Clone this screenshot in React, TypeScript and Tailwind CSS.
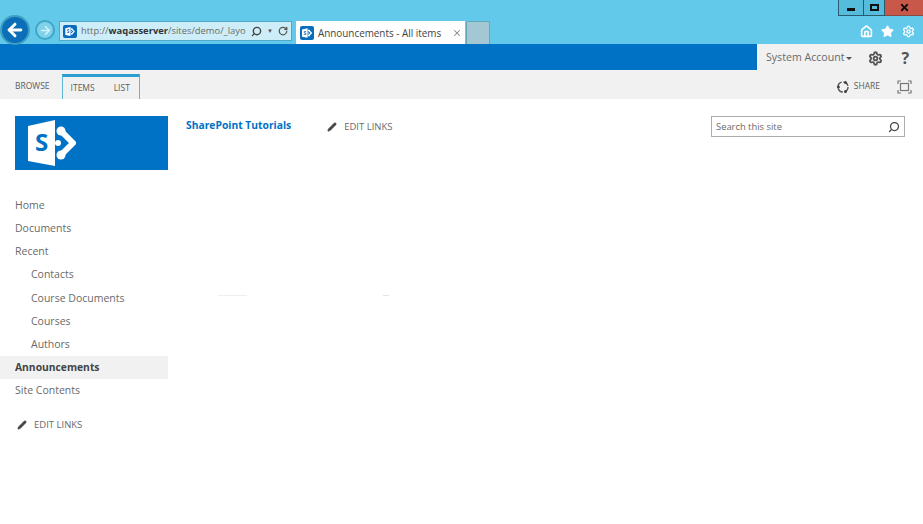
import { ArrowLeft, ArrowRight, Home, Pencil, RotateCw, Search, Settings, Star, X } from "lucide-react";

const font = { fontFamily: '"Open Sans", "Noto Sans", sans-serif' };

// SharePoint mark: folded page with the S and the three-lobed arrow next to it
function SpLogo({ className, page, ink }: { className?: string; page: string; ink: string }) {
  return (
    <svg viewBox="0 0 48 46" className={className}>
      <path d="M0 6 L27 0 V46 L0 41 Z" fill={page} />
      <text x="7" y="31" fontSize="24" fontWeight="700" fill={ink} fontFamily="Open Sans, sans-serif">S</text>
      <path d="M33 11 L45 23 L33 35" fill="none" stroke={page} strokeWidth="6" strokeLinejoin="round" />
      <circle cx="33" cy="11" r="4.5" fill={page} />
      <circle cx="33" cy="35" r="4.5" fill={page} />
      <circle cx="30" cy="23" r="3" fill={page} />
    </svg>
  );
}

function ShareIcon() {
  return (
    <svg viewBox="0 0 14 14" className="mr-[4px] h-[14px] w-[14px]">
      <circle cx="7" cy="7" r="5" fill="none" stroke="#555555" strokeWidth="1.4" strokeDasharray="6 1.8" />
      <circle cx="2.4" cy="7" r="1.5" fill="#444444" />
      <circle cx="9.5" cy="2.6" r="1.5" fill="#444444" />
      <circle cx="9.5" cy="11.4" r="1.5" fill="#444444" />
    </svg>
  );
}

function FocusIcon() {
  return (
    <svg viewBox="0 0 15 14" className="ml-[17px] h-[14px] w-[15px]" fill="none" stroke="#777777" strokeWidth="1.2">
      <path d="M1 4 V1 H4 M11 1 H14 V4 M14 10 V13 H11 M4 13 H1 V10" />
      <rect x="3.5" y="3.5" width="8" height="7" />
    </svg>
  );
}

function NavLink({ label, sub, active }: { label: string; sub?: boolean; active?: boolean }) {
  return (
    <div
      className={`flex h-[23.1px] items-center ${sub ? "pl-[31px]" : "pl-[15px]"} ${
        active ? "bg-[#f1f1f1] text-[10.3px] font-bold text-[#444444]" : "text-[10.5px] text-[#6a6a6a]"
      }`}
    >
      {label}
    </div>
  );
}

function EditLinks() {
  return (
    <div className="flex items-center gap-[7px] text-[9.5px] text-[#6a6a6a]">
      <Pencil className="h-[10px] w-[10px] fill-[#444444] text-[#444444]" strokeWidth={1.5} />
      <span>EDIT LINKS</span>
    </div>
  );
}

function BrowserChrome() {
  return (
    <div className="relative flex h-[44px] flex-col bg-[#62c9ea]">
      <div className="flex h-[16px] justify-end">
        <div className="flex w-[25px] items-end justify-center border-b border-l border-[#2b5b6e] bg-[#55bcdc] pb-[4px]">
          <div className="h-[3px] w-[8px] bg-[#111111]" />
        </div>
        <div className="flex w-[22px] items-center justify-center border-x border-b border-[#2b5b6e] bg-[#55bcdc]">
          <div className="h-[7px] w-[9px] border-2 border-[#111111]" />
        </div>
        <div className="flex w-[38px] items-center justify-center border-b border-[#8a4a40] bg-[#c7584a]">
          <X className="h-[11px] w-[11px] text-[#111111]" strokeWidth={4} />
        </div>
      </div>

      <div className="flex flex-1 items-end pl-[59px] pr-[8px]">
        <div className="mb-[3px] flex h-[20px] w-[233px] items-center border border-[#4fa9c8] bg-[#cdeef8] pl-[3px] text-[9.4px] text-[#6a6a6a]">
          <div className="mr-[4px] h-[13px] w-[14px] rounded-[2px] bg-[#0a6cbf] p-[2px]">
            <SpLogo className="h-[9px] w-[10px]" page="#ffffff" ink="#0a6cbf" />
          </div>
          <span className="w-[170px] overflow-hidden whitespace-nowrap">
            http://<b className="text-[#333333]">waqasserver</b>/sites/demo/_layo
          </span>
          <Search className="h-[11px] w-[11px] -scale-x-100 text-[#444444]" strokeWidth={3} />
          <span className="ml-[5px] text-[6px] text-[#555555]">▼</span>
          <RotateCw className="ml-[5px] h-[10px] w-[10px] text-[#555555]" strokeWidth={3} />
        </div>
        <div className="ml-[4px] flex h-[23px] w-[169px] items-center bg-white pl-[4px] pt-[1px] text-[9.9px] text-[#444444]">
          <div className="mr-[4px] h-[14px] w-[14px] rounded-[2px] bg-[#0a6cbf] p-[2px]">
            <SpLogo className="h-[10px] w-[10px]" page="#ffffff" ink="#0a6cbf" />
          </div>
          <span className="flex-1 whitespace-nowrap">Announcements - All items</span>
          <X className="mr-[3px] h-[10px] w-[10px] text-[#888888]" strokeWidth={2.5} />
        </div>
        <div className="ml-[1px] h-[23px] w-[24px] rounded-t-[2px] border-x border-t border-[#62a9bd] bg-[#a3c7d3]" />
        <div className="mb-[6px] ml-auto flex items-center gap-[8px] text-white">
          <Home className="h-[13px] w-[13px]" strokeWidth={3} />
          <Star className="h-[13px] w-[13px] fill-white" />
          <Settings className="h-[13px] w-[13px]" strokeWidth={2.5} />
        </div>
      </div>

      {/* back and forward buttons hang over the address row */}
      <div className="absolute left-0 top-[15px] flex h-[30px] w-[30px] items-center justify-center rounded-full border-2 border-[#3f9fc2] bg-[#0a6fb8]">
        <ArrowLeft className="h-[20px] w-[20px] text-white" strokeWidth={3.5} />
      </div>
      <div className="absolute left-[35px] top-[20px] flex h-[20px] w-[20px] items-center justify-center rounded-full border-2 border-[#3fa6c8] bg-[#7fd2ea]">
        <ArrowRight className="h-[13px] w-[13px] text-[#d5f1f9]" strokeWidth={3} />
      </div>
    </div>
  );
}

export default function App() {
  const links = [
    { label: "Home" },
    { label: "Documents" },
    { label: "Recent" },
    { label: "Contacts", sub: true },
    { label: "Course Documents", sub: true },
    { label: "Courses", sub: true },
    { label: "Authors", sub: true },
    { label: "Announcements", active: true },
    { label: "Site Contents" },
  ];

  return (
    <div className="flex h-[524px] w-[923px] flex-col overflow-hidden bg-white" style={font}>
      <BrowserChrome />

      <div className="flex h-[26px] bg-[#0072c6]">
        <div className="flex-1" />
        <div className="flex w-[166px] items-center bg-[#f1f1f1] pl-[9px] pt-[2px] text-[10.6px] text-[#6a6a6a]">
          <span className="whitespace-nowrap">System Account</span>
          <span className="ml-[2px] h-0 w-0 border-x-[3px] border-t-[3px] border-x-transparent border-t-[#555555]" />
          <Settings className="ml-[16px] h-[15px] w-[15px] text-[#555555]" strokeWidth={3} />
          <span className="ml-[18px] text-[16px] font-bold leading-none text-[#555555]">?</span>
        </div>
      </div>

      <div className="flex h-[29px] items-end bg-[#f1f1f1] text-[8.5px] text-[#5c5c5c]">
        <div className="flex h-[25px] items-center pl-[15px] pr-[12px]">BROWSE</div>
        <div className="flex h-[25px] items-center gap-[19px] border-x border-t-[3px] border-[#60b6d6] border-t-[#2a9fd0] pl-[8px] pr-[9px]">
          <span>ITEMS</span>
          <span>LIST</span>
        </div>
        <div className="ml-auto flex h-[25px] items-center pr-[11px]">
          <ShareIcon />
          <span>SHARE</span>
          <FocusIcon />
        </div>
      </div>

      <div className="flex flex-1">
        <div className="w-[168px]">
          <div className="ml-[15px] mt-[17px] flex h-[54px] w-[153px] items-center bg-[#0072c6] pl-[13px]">
            <SpLogo className="h-[46px] w-[48px]" page="#ffffff" ink="#0072c6" />
          </div>
          <nav className="mt-[24.5px]">
            {links.map((link) => (
              <NavLink key={link.label} {...link} />
            ))}
          </nav>
          <div className="ml-[17px] mt-[16px]">
            <EditLinks />
          </div>
        </div>

        <div className="flex-1">
          <div className="flex items-start pl-[18px] pr-[18px] pt-[17px]">
            <span className="mt-[2px] text-[10.3px] font-bold text-[#0072c6]">SharePoint Tutorials</span>
            <div className="ml-[36px] mt-[4px]">
              <EditLinks />
            </div>
            <div className="ml-auto flex h-[21px] w-[194px] items-center border border-[#ababab] pl-[4px] pr-[4px] pt-[1px] text-[9.4px] text-[#6a6a6a]">
              <span className="flex-1">Search this site</span>
              <Search className="h-[12px] w-[12px] -scale-x-100 text-[#444444]" strokeWidth={2.5} />
            </div>
          </div>
          {/* faint remains of the empty list view */}
          <div className="ml-[50px] mt-[158px] flex">
            <div className="h-px w-[29px] bg-[#efefef]" />
            <div className="ml-[136px] h-px w-[6px] bg-[#e4e4e4]" />
          </div>
        </div>
      </div>
    </div>
  );
}
